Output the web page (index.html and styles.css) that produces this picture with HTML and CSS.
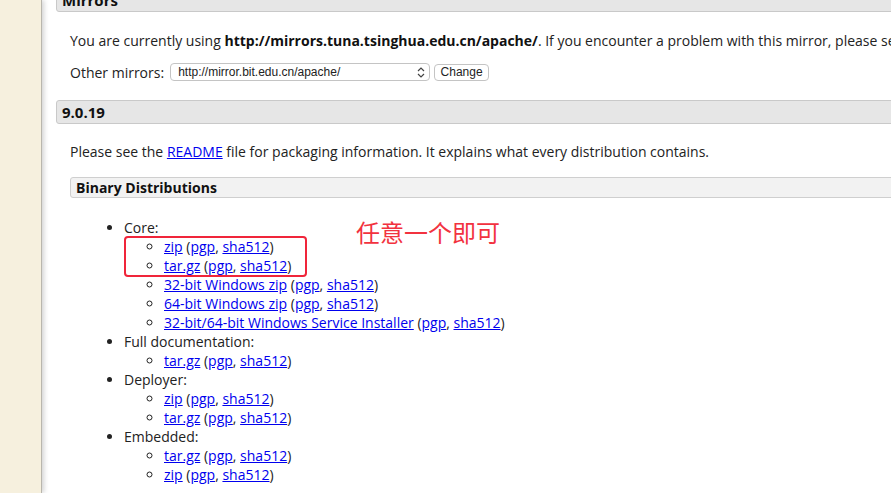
FILE: index.html
```html
<!DOCTYPE html>
<html>
<head>
<meta charset="utf-8">
<link rel="stylesheet" href="styles.css">
</head>
<body>
<div class="page">
  <aside class="sidebar"></aside>
  <main class="main">
    <h3 class="section-head">Mirrors</h3>
    <div class="section-body">
      <p class="para">You are currently using <b>http://mirrors.tuna.tsinghua.edu.cn/apache/</b>. If you encounter a problem with this mirror, please select another mirror. If all mirrors are failing, there are backup mirrors.</p>
      <div class="mirror-row">
        <span>Other mirrors:</span>
        <span class="select">
          <span class="select-text">http://mirror.bit.edu.cn/apache/</span>
          <svg class="chev" width="8" height="11" viewBox="0 0 8 11"><path d="M1 4 L4 1 L7 4 M1 7 L4 10 L7 7" fill="none" stroke="#444" stroke-width="1.2"/></svg>
        </span>
        <span class="btn">Change</span>
      </div>
    </div>
    <h3 class="section-head">9.0.19</h3>
    <div class="section-body">
      <p class="para para2">Please see the <a href="#">README</a> file for packaging information. It explains what every distribution contains.</p>
      <h4 class="sub-head">Binary Distributions</h4>
      <ul class="dist">
        <li>Core:
          <ul>
            <li><a href="#">zip</a> (<a href="#">pgp</a>, <a href="#">sha512</a>)</li>
            <li><a href="#">tar.gz</a> (<a href="#">pgp</a>, <a href="#">sha512</a>)</li>
            <li><a href="#">32-bit Windows zip</a> (<a href="#">pgp</a>, <a href="#">sha512</a>)</li>
            <li><a href="#">64-bit Windows zip</a> (<a href="#">pgp</a>, <a href="#">sha512</a>)</li>
            <li><a href="#">32-bit/64-bit Windows Service Installer</a> (<a href="#">pgp</a>, <a href="#">sha512</a>)</li>
          </ul>
        </li>
        <li>Full documentation:
          <ul>
            <li><a href="#">tar.gz</a> (<a href="#">pgp</a>, <a href="#">sha512</a>)</li>
          </ul>
        </li>
        <li>Deployer:
          <ul>
            <li><a href="#">zip</a> (<a href="#">pgp</a>, <a href="#">sha512</a>)</li>
            <li><a href="#">tar.gz</a> (<a href="#">pgp</a>, <a href="#">sha512</a>)</li>
          </ul>
        </li>
        <li>Embedded:
          <ul>
            <li><a href="#">tar.gz</a> (<a href="#">pgp</a>, <a href="#">sha512</a>)</li>
            <li><a href="#">zip</a> (<a href="#">pgp</a>, <a href="#">sha512</a>)</li>
          </ul>
        </li>
      </ul>
    </div>
  </main>
  <div class="mark-box"></div>
  <div class="mark-note">任意一个即可</div>
</div>
</body>
</html>
```
FILE: styles.css
```css
html, body {
  margin: 0;
  padding: 0;
  background: #fff;
  overflow: hidden;
}
body {
  width: 891px;
  height: 493px;
  font-family: "Open Sans", "Noto Sans", sans-serif;
  font-size: 14px;
  color: #222;
}
.page {
  position: relative;
  display: flex;
  height: 493px;
}
.sidebar {
  flex: 0 0 41px;
  background: #f6f0de;
  border-right: 1px solid #b9b6ad;
  box-shadow: 2px 0 5px rgba(0, 0, 0, 0.18);
  position: relative;
  z-index: 1;
}
.main {
  flex: 0 0 1200px;
  padding-left: 14px;
  margin-top: -12px;
}
.section-head {
  margin: 0;
  height: 22px;
  line-height: 22px;
  padding-left: 5px;
  background: #e6e6e6;
  border: 1px solid #c9c9c9;
  border-radius: 3px;
  font-size: 15px;
  font-weight: 700;
  color: #111;
}
.section-body {
  padding-left: 14px;
}
.para {
  margin: 0;
  padding-top: 19px;
  line-height: 20px;
  white-space: nowrap;
}
.para b { color: #111; }
.para2 {
  padding-top: 18px;
}
.mirror-row {
  display: flex;
  align-items: center;
  gap: 4px;
  margin-top: 12px;
  height: 18px;
  margin-bottom: 19px;
}
.mirror-row > span:first-child {
  margin-right: 2px;
}
.select {
  display: flex;
  align-items: center;
  justify-content: space-between;
  box-sizing: border-box;
  width: 260px;
  height: 18px;
  padding: 0 4px 0 7px;
  border: 1px solid #c4c4c4;
  border-radius: 4px;
  background: #fff;
  font-family: "Liberation Sans", Arial, sans-serif;
  font-size: 12px;
  color: #222;
}
.btn {
  box-sizing: border-box;
  width: 55px;
  height: 17px;
  text-align: center;
  border: 1px solid #c4c4c4;
  border-radius: 4px;
  background: #fff;
  font-family: "Liberation Sans", Arial, sans-serif;
  font-size: 12px;
  line-height: 15px;
  color: #222;
}
a {
  color: #0000ee;
  text-decoration: underline;
}
.sub-head {
  margin: 15px 0 0;
  height: 19px;
  line-height: 19px;
  padding-left: 5px;
  background: #f2f2f2;
  border: 1px solid #cfcfcf;
  border-radius: 3px;
  font-size: 14px;
  font-weight: 700;
  color: #111;
}
.dist {
  margin: 20px 0 0;
  padding-left: 54px;
  line-height: 19px;
  list-style: disc;
}
.dist ul {
  margin: 0;
  padding-left: 40px;
  list-style: circle;
}
.mark-box {
  position: absolute;
  left: 124px;
  top: 236px;
  width: 183px;
  height: 41px;
  box-sizing: border-box;
  border: 2px solid #f0253a;
  border-radius: 4px;
}
.mark-note {
  position: absolute;
  left: 356px;
  top: 216px;
  font-family: "Noto Sans CJK SC", sans-serif;
  font-size: 24px;
  line-height: 32px;
  color: #f2323f;
}
```
